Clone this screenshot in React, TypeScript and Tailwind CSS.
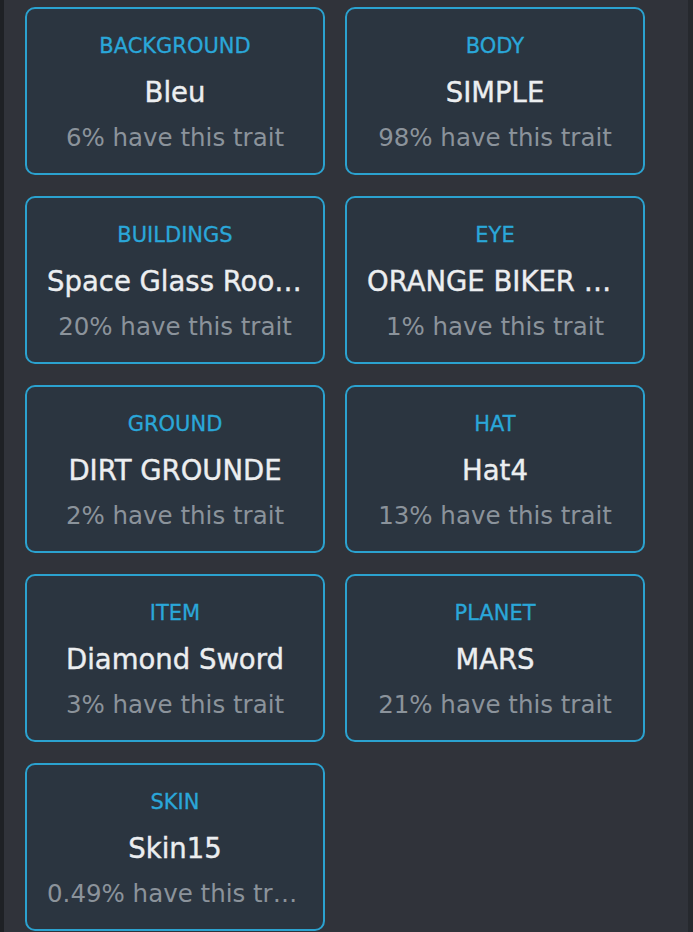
import React from "react";

const traits = [
  { label: "BACKGROUND", value: "Bleu", pct: "6% have this trait" },
  { label: "BODY", value: "SIMPLE", pct: "98% have this trait" },
  { label: "BUILDINGS", value: "Space Glass Rooftop", pct: "20% have this trait" },
  { label: "EYE", value: "ORANGE BIKER EYES", pct: "1% have this trait" },
  { label: "GROUND", value: "DIRT GROUNDE", pct: "2% have this trait" },
  { label: "HAT", value: "Hat4", pct: "13% have this trait" },
  { label: "ITEM", value: "Diamond Sword", pct: "3% have this trait" },
  { label: "PLANET", value: "MARS", pct: "21% have this trait" },
  { label: "SKIN", value: "Skin15", pct: "0.49% have this trait" },
];

export default function App() {
  return (
    <div
      className="flex min-h-screen w-full bg-[#30333a] border-l-[4px] border-l-[#1e2125] border-r-[5px] border-r-[#26292e]"
      style={{ fontFamily: '"DejaVu Sans", "Open Sans", sans-serif' }}
    >
      <div className="grid grid-cols-[300px_300px] gap-x-[20px] gap-y-[21px] pl-[21px] pt-[7px] pb-6 content-start">
        {traits.map((t) => (
          <div
            key={t.label}
            className="h-[168px] rounded-[10px] border-2 border-[#2ba2cf] bg-[#2b3540] px-5 pt-[2px] flex flex-col justify-center items-center text-center min-w-0"
          >
            <div className="w-full truncate text-[21px] leading-[46px] text-[#2aa7d9] [-webkit-text-stroke:0.3px_#2aa7d9]">
              {t.label}
            </div>
            <div className="w-full truncate text-[27.5px] leading-[46px] text-[#eceef0] [-webkit-text-stroke:0.4px_#eceef0]">
              {t.value}
            </div>
            <div className="w-full truncate text-[24.5px] leading-[46px] text-[#8b939b]">
              {t.pct}
            </div>
          </div>
        ))}
      </div>
    </div>
  );
}
